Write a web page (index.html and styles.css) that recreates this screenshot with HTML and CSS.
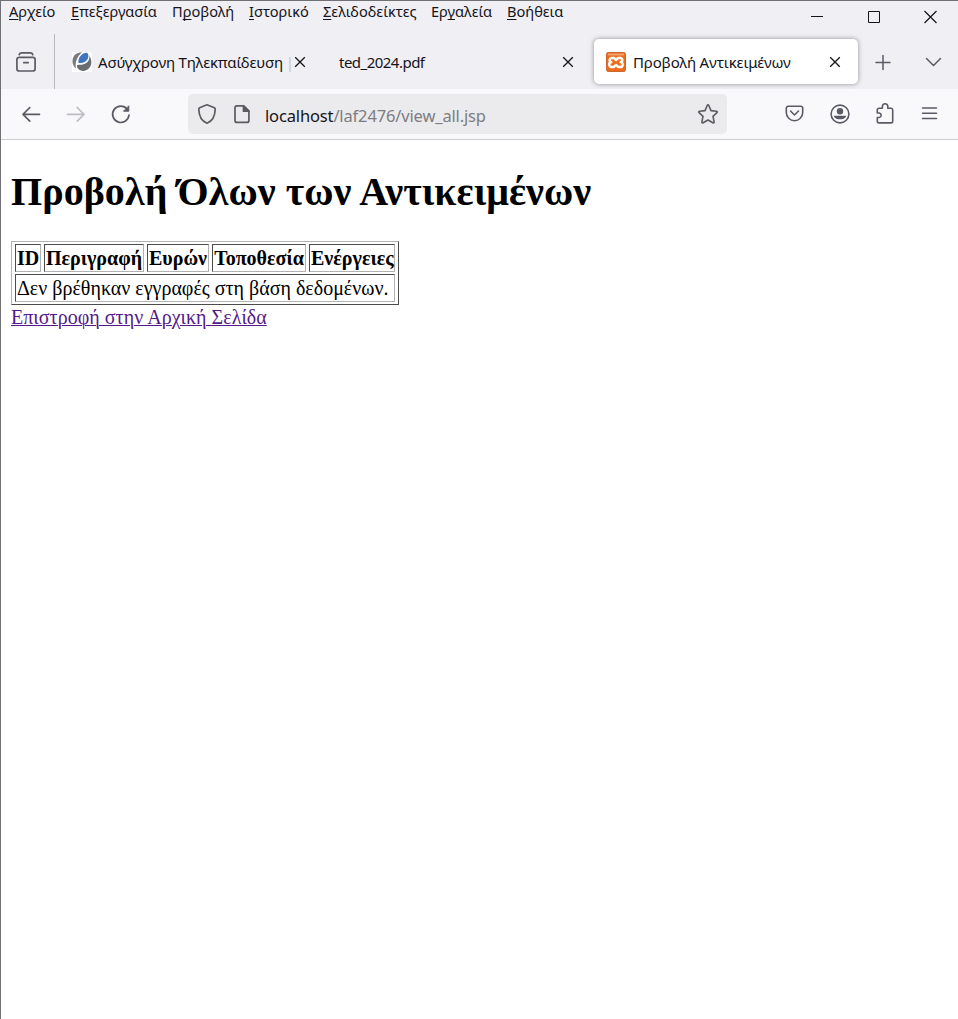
FILE: index.html
```html
<!DOCTYPE html>
<html lang="el">
<head>
<meta charset="utf-8">
<title>Προβολή Αντικειμένων</title>
<link rel="stylesheet" href="styles.css">
</head>
<body>
<div class="window">
  <header class="menubar">
    <nav class="menus">
      <span class="menu m1"><u>Α</u>ρχείο</span>
      <span class="menu m2"><u>Ε</u>πεξεργασία</span>
      <span class="menu m3">Π<u>ρ</u>οβολή</span>
      <span class="menu m4"><u>Ι</u>στορικό</span>
      <span class="menu m5"><u>Σ</u>ελιδοδείκτες</span>
      <span class="menu m6">Ερ<u>γ</u>αλεία</span>
      <span class="menu m7"><u>Β</u>οήθεια</span>
    </nav>
    <svg class="controls" width="128" height="16" viewBox="0 0 128 16" fill="none" stroke="#15141a" stroke-width="1">
      <path d="M0 7.500H12M57.500 2.500h11v11h-11z"/>
      <path d="M113.500 2l12 12m0-12l-12 12" stroke-width="1.200"/>
    </svg>
  </header>

  <div class="tabbar">
    <div class="recent">
      <svg width="22" height="22" viewBox="0 0 22 22" fill="none" stroke="#5b5b66" stroke-width="1.700" stroke-linecap="round">
        <rect x="1.900" y="6.300" width="18.200" height="13.700" rx="2.300"/>
        <path d="M4.200 3.600Q4.800 1.900 6.600 1.900h8.800Q17.200 1.900 17.800 3.600"/>
        <path d="M8.800 11.700h4.400"/>
      </svg>
    </div>
    <div class="tab first">
      <svg class="favicon" width="20" height="20" viewBox="0 0 20 20">
        <rect width="20" height="20" fill="#fff"/>
        <path d="M10 .300C4 .500.300 4 .500 9.500c.100 2.600 1.200 5.100 3.400 7C2.800 10.500 5 4.500 10 .300z" fill="#77797c"/>
        <path d="M15 .800C10 .600 6.300 5 6.300 10.800c4.300.900 8.300-.800 9.600-4.200.9-2.400.5-4.500-.9-5.800z" fill="#3d76be"/>
        <path d="M17.200 3.500c1.300 5.200-3 9.800-10.900 9.300-1.100-.100-1.500.900-1.300 2 .800 2.700 2.900 4.100 6 4.100 5.300-.200 8.500-4.400 8.300-8.900-.100-2.500-.800-4.700-2.100-6.500z" fill="#696d71"/>
      </svg>
      <span class="label t1">Ασύγχρονη Τηλεκπαίδευση <i>|</i></span>
      <svg class="close" width="12" height="12" viewBox="0 0 12 12"><path d="M1.200 1.200l9.600 9.600m0-9.600l-9.600 9.600"/></svg>
    </div>
    <div class="tab second">
      <span class="label t2">ted_2024.pdf</span>
      <svg class="close" width="12" height="12" viewBox="0 0 12 12"><path d="M1.200 1.200l9.600 9.600m0-9.600l-9.600 9.600"/></svg>
    </div>
    <div class="tab active">
      <svg class="favicon" width="20" height="20" viewBox="0 0 20 20">
        <rect x=".5" y=".5" width="19" height="19" rx="1.800" fill="#ed6d1a" stroke="#c9672c"/>
        <path d="M2 1.500h16v2H2z" fill="#f1a36f"/>
        <path d="M8 6H6.200a2.100 2.100 0 0 0-.9 4.100A2.400 2.400 0 0 0 6.200 15H7.500C9 15 8.800 13 10 13s1 2 2.500 2h1.300a2.400 2.400 0 0 0 .9-4.900A2.100 2.100 0 0 0 13.800 6H12c-1.200 0-.8 2-2 2s-.8-2-2-2z" fill="none" stroke="#fff" stroke-width="2.500" stroke-linejoin="round"/>
      </svg>
      <span class="label t3">Προβολή Αντικειμένων</span>
      <svg class="close" width="12" height="12" viewBox="0 0 12 12"><path d="M1.200 1.200l9.600 9.600m0-9.600l-9.600 9.600"/></svg>
    </div>
    <svg class="tabtools" width="68" height="18" viewBox="0 0 68 18" fill="none" stroke="#5b5b66" stroke-width="1.500" stroke-linecap="round" stroke-linejoin="round">
      <path d="M1 9.500h14M8 2.500v14M51.500 5.500l7 7 7-7"/>
    </svg>
  </div>

  <div class="toolbar">
    <svg class="history" width="112" height="22" viewBox="0 0 112 22" fill="none" stroke="#5b5b66" stroke-width="1.700" stroke-linecap="round" stroke-linejoin="round">
      <path d="M18.500 11.300H2M8.800 4.500L2 11.300l6.800 6.800"/>
      <path d="M46.500 11.300H63M56.200 4.500l6.800 6.800-6.800 6.800" stroke="#bebec5"/>
      <path d="M106.300 6.200A8.200 8.200 0 1 0 108 12"/>
      <path d="M107.800 3.200v5h-5z" fill="#5b5b66" stroke-width="1"/>
    </svg>
    <div class="urlbar">
      <svg width="56" height="22" viewBox="0 0 56 22" fill="none" stroke="#5b5b60" stroke-width="1.700" stroke-linejoin="round">
        <path d="M10 1.800L17.400 4.700Q18.200 5 18.200 6C18.100 12.500 15.500 18 10 20.200 4.500 18 1.900 12.500 1.800 6Q1.800 5 2.600 4.700z"/>
        <path d="M40 2.800h6.600l5.300 5.300v9.300a2 2 0 0 1-2 2H40a2 2 0 0 1-2-2V4.800a2 2 0 0 1 2-2z"/>
        <path d="M46.500 2.800v5.400h5.400z" fill="#5b5b60"/>
      </svg>
      <span class="url"><b>localhost</b>/laf2476/view_all.jsp</span>
      <svg class="star" width="22" height="22" viewBox="0 0 22 22" fill="none" stroke="#5b5b60" stroke-width="1.600" stroke-linejoin="round">
        <path d="M10.200 2.500Q11 1.300 11.800 2.500L14 7.600l5.400.6q1.500.3.500 1.500l-3.900 3.700 1.100 5.500q.1 1.500-1.200.9L11 17l-4.900 2.800q-1.300.6-1.200-.9L6 13.400 2.100 9.700q-1-1.200.5-1.500L8 7.600z"/>
      </svg>
    </div>
    <svg class="actions" width="158" height="24" viewBox="0 0 158 24" fill="none" stroke="#5b5b66" stroke-width="1.600" stroke-linecap="round" stroke-linejoin="round">
      <path d="M4.300 4.300h12.400a2 2 0 0 1 2 2v4.200a8.200 8.200 0 0 1-16.400 0V6.300a2 2 0 0 1 2-2z"/>
      <path d="M6.500 9l4 4 4-4"/>
      <circle cx="56" cy="12" r="8.900"/>
      <circle cx="56" cy="9.300" r="3.200" fill="#5b5b66" stroke="none"/>
      <path d="M50.500 13.700h11a.8.800 0 0 1 .5 1c-1.700 3.400-10.300 3.400-12 0a.8.800 0 0 1 .5-1z" fill="#5b5b66" stroke="none"/>
      <path d="M93.300 11V8q0-1.700 1.700-1.700h3.400V4.400a2.700 2.700 0 0 1 5.400 0v1.900h3.300q1.600 0 1.600 1.700v11.200q0 1.700-1.700 1.700H95q-1.700 0-1.700-1.700v-3.700h2a2.300 2.300 0 0 0 0-4.500z"/>
      <path d="M138.500 6h14M138.500 11.300h14M138.500 16.500h14" stroke-width="1.500"/>
    </svg>
  </div>

  <main class="page">
    <h1>Προβολή Όλων των Αντικειμένων</h1>
    <table class="items">
      <colgroup><col class="c-id"><col class="c-desc"><col class="c-finder"><col class="c-place"><col class="c-actions"></colgroup>
      <tr><th>ID</th><th>Περιγραφή</th><th>Ευρών</th><th>Τοποθεσία</th><th>Ενέργειες</th></tr>
      <tr><td colspan="5">Δεν βρέθηκαν εγγραφές στη βάση δεδομένων.</td></tr>
    </table>
    <a class="back" href="#">Επιστροφή στην Αρχική Σελίδα</a>
  </main>
</div>
</body>
</html>
```
FILE: styles.css
```css
* { box-sizing: border-box; }
body { margin: 0; background: #fff; }
svg { display: block; flex: none; }
.window {
  height: 1019px;
  overflow: hidden;
  border-top: 1px solid #717074;
  border-left: 1px solid #717074;
  font-family: "Noto Sans", "Open Sans", sans-serif;
  color: #15141a;
}
.menubar {
  display: flex;
  justify-content: space-between;
  height: 33px;
  background: #f0eff4;
  padding-left: 8px;
}
.menus { display: flex; gap: 15px; }
.menu { font-size: 14.6px; line-height: 21px; white-space: nowrap; }
.menu u { text-underline-offset: 2px; text-decoration-thickness: 1px; text-decoration-skip-ink: none; }
.m1 { width: 47px; }
.m2 { width: 86px; }
.m3 { width: 62px; }
.m4 { width: 59px; }
.m5 { width: 93px; }
.m6 { width: 61px; }
.m7 { width: 57px; }
.controls { margin: 8px 19px 0 0; }

.tabbar { display: flex; height: 55px; background: #f0eff4; }
.recent {
  width: 54px;
  border-right: 1px solid #b9b8bd;
  padding: 17px 0 0 14px;
}
.tab { display: flex; align-items: center; height: 46px; margin-top: 5px; }
.label { font-size: 15px; line-height: 22px; white-space: nowrap; }
.label i { font-style: normal; color: #c8c7cc; margin-left: -1px; }
.t1 { letter-spacing: -.21px; }
.t2 { letter-spacing: -.52px; }
.t3 { letter-spacing: -.15px; }
.close { fill: none; stroke: #15141a; stroke-width: 1.3; margin-left: auto; }
.first { width: 251px; padding-left: 17px; }
.first .label { margin-left: 6px; }
.second { width: 268px; padding-left: 33px; }
.active {
  width: 264px;
  margin-left: 20px;
  padding: 0 17px 0 12px;
  border-radius: 5px;
  background: #fff;
  box-shadow: 0 0 5px rgba(0, 0, 0, .4);
}
.tab.active { height: 45px; }
.active .label { margin: 1px 0 0 7px; }
.tabtools { margin: 19px 0 0 17px; }

.toolbar {
  display: flex;
  height: 51px;
  background: #f9f9fb;
  border-bottom: 1px solid #ccc;
}
.history { margin: 14px 0 0 20px; }
.urlbar {
  display: flex;
  align-items: center;
  width: 539px;
  height: 40px;
  margin: 5px 0 0 55px;
  padding: 0 8px 0 9px;
  border-radius: 5px;
  background: #ebebed;
}
.url { margin-left: 12px; font-size: 16.5px; line-height: 24px; margin-top: 4px; letter-spacing: -.15px; color: #7d7d82; white-space: nowrap; }
.url b { font-weight: 400; color: #15141a; }
.star { margin-left: auto; }
.actions { margin: 13px 0 0 56.500px; }

.page { padding: 29px 10px; font-family: "Liberation Serif", serif; color: #000; font-size: 20px; }
h1 { margin: 0 0 26px; font-size: 40px; line-height: 46px; font-weight: 700; letter-spacing: .07px; white-space: nowrap; }
.items {
  width: 388px;
  table-layout: fixed;
  border: 1px solid;
  border-color: #b2b2b2 #4c4c4c #4c4c4c #b2b2b2;
  border-collapse: separate;
  border-spacing: 3px 2px;
}
.items th, .items td {
  height: 28px;
  padding: 1px;
  border: 1px solid;
  border-color: #4c4c4c #b2b2b2 #b2b2b2 #4c4c4c;
  line-height: 24px;
  white-space: nowrap;
}
.c-id { width: 26px; }
.c-desc { width: 100px; }
.c-finder { width: 62px; }
.c-place { width: 94px; }
.c-actions { width: 86px; }
.back { display: block; width: max-content; line-height: 25px; letter-spacing: .03px; color: #551a8b; text-decoration-thickness: 1px; }
```
